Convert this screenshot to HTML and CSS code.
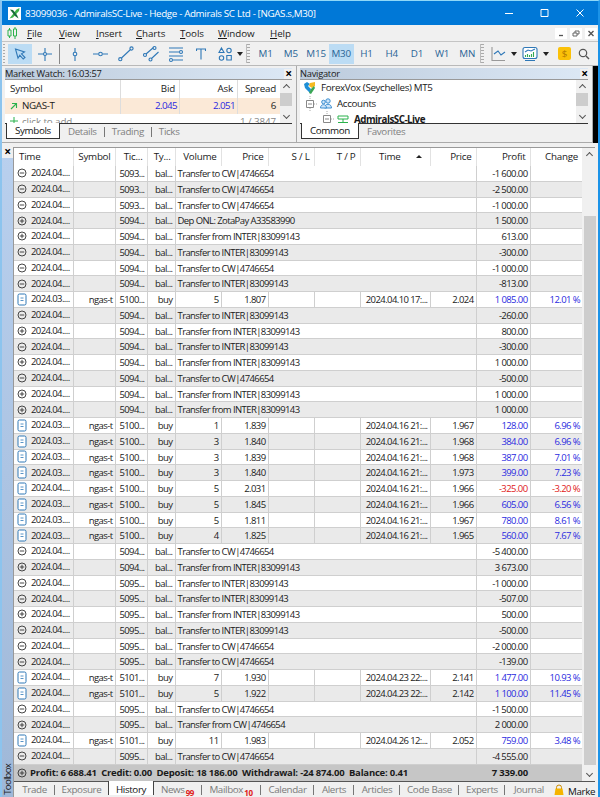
FILE: index.html
```html
<!DOCTYPE html>
<html lang="en">
<head>
    <meta charset="UTF-8">
    <meta name="viewport" content="width=device-width, initial-scale=1.0">
    <title>83099036 - AdmiralsSC-Live</title>
    <link rel="stylesheet" href="styles.css">
</head>
<body>
    <div class="window">
        <div class="titlebar">
            <svg class="logo" viewBox="0 0 13 13"><rect width="13" height="13" fill="#fff"/><path d="M11.500 1L8.500 2.500 1.500 11.500 5 10.500 11 4z" fill="#3fb54a"/><path d="M2 2.500L5 3l4 5 1.500 3.500L7 9z" fill="#176c3a"/></svg>
            <span class="title-text">83099036 - AdmiralsSC-Live - Hedge - Admirals SC Ltd - [NGAS.s,M30]</span>
            <svg class="win-buttons" viewBox="0 0 80 10" fill="none" stroke="#fff"><path d="M0 5.500h8M36 1.500h7v7h-7zM71.500 1.500l7 7M78.500 1.500l-7 7"/></svg>
        </div>

        <div class="menubar">
            <svg class="candles" viewBox="0 0 11 12" fill="none" stroke="#2bb24c"><path d="M2.500 1v2M2.500 9v2M1 3h3v6H1zM8 0v2M8 9v3M6.500 2h3v7h-3z"/></svg>
            <span class="menu m-file"><u>F</u>ile</span>
            <span class="menu m-view"><u>V</u>iew</span>
            <span class="menu m-insert"><u>I</u>nsert</span>
            <span class="menu m-charts"><u>C</u>harts</span>
            <span class="menu m-tools"><u>T</u>ools</span>
            <span class="menu m-window"><u>W</u>indow</span>
            <span class="menu"><u>H</u>elp</span>
            <div class="mdi">
                <svg viewBox="0 0 12 11" fill="none" stroke="#555"><path d="M4 7.500h4" stroke-width="1.300"/></svg>
                <svg viewBox="0 0 12 11" fill="none" stroke="#666"><path d="M3 5h4v3H3zM5 5V3h4v3H7"/></svg>
                <svg viewBox="0 0 12 11" fill="none" stroke="#555"><path d="M3.500 3l5 5M8.500 3l-5 5" stroke-width="1.400"/></svg>
            </div>
        </div>

        <div class="toolbar">
            <i class="grip"></i>
            <span class="tool active"><svg viewBox="0 0 24 20"><path d="M7.500 5l9 3-3 1.800 3.500 3.700-1.800 1.500-3.400-3.800-1.800 3z"/></svg></span>
            <span class="tool t-cross"><svg viewBox="0 0 14 20"><path d="M7 4v4.500M7 11.500V17M0 10h5.500M8.500 10H14"/><circle cx="7" cy="10" r="1.500"/></svg></span>
            <i class="divider"></i>
            <span class="tool t-vline"><svg viewBox="0 0 8 20"><path d="M4 4v4M4 12v5"/><circle cx="4" cy="10" r="1.800"/></svg></span>
            <span class="tool t-hline"><svg viewBox="0 0 15 20"><path d="M0 10h5.500M9.500 10H15"/><circle cx="7.500" cy="10" r="1.800"/></svg></span>
            <span class="tool t-trend"><svg viewBox="0 0 16 20"><path d="M3.500 14l9-8.500"/><circle cx="2.300" cy="15.200" r="1.600"/><circle cx="13.500" cy="4.500" r="1.600"/></svg></span>
            <span class="tool t-channel"><svg viewBox="0 0 16 20"><path d="M3 10l7.500-6.500M8.500 14.500l7-6.500"/><circle cx="2" cy="11" r="1.500"/><circle cx="11.500" cy="4" r="1.500"/><circle cx="7.500" cy="15.500" r="1.500"/></svg></span>
            <span class="tool t-fibo"><svg viewBox="0 0 16 20"><path d="M1 4h14M1 8h10M1 12h14M5 16h10"/><circle cx="13" cy="8" r="1.500"/><circle cx="3" cy="16" r="1.500"/></svg></span>
            <span class="tool t-text"><svg viewBox="0 0 10 20"><path d="M.5 7V5h9v2M5 5v10.500"/></svg></span>
            <span class="tool t-shapes"><svg viewBox="0 0 14 20"><path d="M3.500 4l2.500 4.500H1zM8.800 11.500h4.500V16H8.800z"/><circle cx="11" cy="6.500" r="2.200"/><circle cx="3.500" cy="14" r="2.200"/></svg></span>
            <i class="arrow"></i>
            <i class="grip g2"></i>
            <div class="periods">
                <span>M1</span><span>M5</span><span>M15</span><span class="on">M30</span><span>H1</span><span>H4</span><span>D1</span><span>W1</span><span>MN</span>
            </div>
            <i class="grip g3"></i>
            <span class="tool t-line"><svg viewBox="0 0 15 20"><path d="M1 3v13.500h13" stroke="#999"/><path d="M3 10l4-3 3 4 4-3"/></svg></span>
            <i class="arrow"></i>
            <span class="tool t-ind"><svg viewBox="0 0 16 20"><rect x="1" y="3.500" width="14" height="11" rx="2" fill="#fff"/><path d="M3 8l3-2 3 1 4-2M3 16.500h10"/><path d="M3.500 13v-2M5.500 13V10M7.500 13v-2M9.500 13v-3M11.500 13V8" stroke="#35a853"/></svg></span>
            <i class="arrow"></i>
            <span class="dollar">$</span>
            <span class="tool t-search"><svg viewBox="0 0 12 20"><circle cx="5" cy="9" r="3.700" stroke="#555" stroke-width="1.200"/><path d="M8 12l3 3" stroke="#555" stroke-width="1.400"/></svg></span>
        </div>

        <div class="docks">
            <div class="dock watch">
                <div class="dock-head"><span>Market Watch: 16:03:57</span><b class="close">×</b></div>
                <div class="dock-body">
                    <div class="quotes">
                        <div class="quote head"><span>Symbol</span><span>Bid</span><span>Ask</span><span>Spread</span></div>
                        <div class="quote hot"><span><svg class="up" viewBox="0 0 8 8"><path d="M1 7l5.500-5.500M2 1.500h4.500V6" fill="none" stroke="#2bb24c" stroke-width="1.100"/></svg>NGAS-T</span><span>2.045</span><span>2.051</span><span>6</span></div>
                        <div class="quote add"><span><svg class="up" viewBox="0 0 8 8"><path d="M4 0v8M0 4h8" fill="none" stroke="#2bb24c"/></svg>click to add</span><span></span><span></span><span>1 / 3847</span></div>
                    </div>
                    <div class="scroll"><i class="chev up-c"></i><i class="thumb"></i><i class="chev"></i></div>
                </div>
                <div class="dock-tabs"><span class="on">Symbols</span><span>Details</span><i></i><span>Trading</span><i></i><span>Ticks</span></div>
            </div>
            <div class="dock nav">
                <div class="dock-head"><span>Navigator</span><b class="close">×</b></div>
                <div class="dock-body">
                    <div class="tree">
                        <div class="node"><svg class="vox" viewBox="0 0 12 12"><path d="M0 2l3-2 3 2-2 2 3 3-1 4-5-5z" fill="#1f8fd6"/><path d="M6 1l5-1v4L8 6 5 4z" fill="#f5b921"/><path d="M10 4l1 2-4 6-2-1 2-4z" fill="#3aa655"/></svg><span>ForexVox (Seychelles) MT5</span></div>
                        <div class="node n1"><svg class="box" viewBox="0 0 12 16"><path d="M4 0v4M4 12v4M8 8h4" stroke="#aaa" stroke-dasharray="1 1" fill="none"/><path d="M.5 4.500h7v7h-7zM2 8h4" fill="none" stroke="#888"/></svg><svg class="people" viewBox="0 0 12 11" fill="#cfe6fa" stroke="#3d8fd1"><circle cx="8" cy="3" r="2.200"/><path d="M4.500 10c0-5 7-5 7 0z"/><circle cx="3.500" cy="4" r="1.800"/><path d="M.5 10c0-4.500 6-4.500 6 0z"/></svg><span>Accounts</span></div>
                        <div class="node n2"><svg class="box" viewBox="0 0 12 16"><path d="M4 0v4M4 12v4M8 8h4" stroke="#aaa" stroke-dasharray="1 1" fill="none"/><path d="M.5 4.500h7v7h-7zM2 8h4" fill="none" stroke="#888"/></svg><svg class="server" viewBox="0 0 12 11" fill="none" stroke="#2bb24c"><path d="M1 2h10v3H1zM6 5v4M1 8.500h10"/></svg><b>AdmiralsSC-Live</b></div>
                    </div>
                    <div class="scroll"><i class="chev up-c"></i><i class="thumb"></i><i class="chev"></i></div>
                </div>
                <div class="dock-tabs"><span class="on">Common</span><span>Favorites</span></div>
            </div>
            <div class="backdrop"></div>
        </div>

        <div class="toolbox">
            <div class="strip"><b class="close">×</b><span>Toolbox</span></div>
            <div class="history">
                <div class="grid-wrap">
                    <div class="grid">
                        <div class="row header">
                            <span class="left">Time</span><span>Symbol</span><span>Tic...</span><span>Ty...</span><span>Volume</span><span>Price</span><span>S / L</span><span>T / P</span><span class="sorted">Time<i></i></span><span>Price</span><span>Profit</span><span>Change</span>
                        </div>
                        <div id="rows"></div>
                        <div class="total">
                            <svg class="op" viewBox="0 0 10 10"><circle cx="5" cy="5" r="4"/><path d="M2.800 5h4.400M5 2.800v4.400"/></svg>
                            <span class="sum">Profit: 6 688.41&nbsp; Credit: 0.00&nbsp; Deposit: 18 186.00&nbsp; Withdrawal: -24 874.00&nbsp; Balance: 0.41</span>
                            <span class="result">7 339.00</span>
                        </div>
                    </div>
                    <div class="scroll big"><i class="chev up-c"></i><i class="thumb"></i><i class="chev"></i></div>
                </div>
                <div class="tabs">
                    <span class="w1">Trade</span><span class="w2">Exposure</span><span class="w3 on">History</span><span class="w4">News<sub>99</sub></span><span class="w5">Mailbox<sub>10</sub></span><span class="w6">Calendar</span><span class="w7">Alerts</span><span class="w8">Articles</span><span class="w9">Code Base</span><span class="w10">Experts</span><span class="w11">Journal</span>
                    <span class="market"><svg viewBox="0 0 10 12"><path d="M2.500 5V3.500a2.500 2.500 0 015 0V5" fill="none" stroke="#c98a00"/><path d="M1.500 4.500h7l1 6.500h-9z" fill="#f5b400"/></svg>Marke</span>
                </div>
            </div>
        </div>
    </div>
    <script src="script.js"></script>
</body>
</html>
```
FILE: styles.css
```css
body {
    margin: 0;
    font-family: "Open Sans", "Noto Sans", sans-serif;
    font-size: 9.8px;
    letter-spacing: -0.35px;
    color: #1a1a1a;
    background: #f0f0f0;
}

.window {
    box-sizing: border-box;
    width: 600px;
    height: 797px;
    overflow: hidden;
    display: flex;
    flex-direction: column;
    border-top: 1px solid #8fd8f8;
    border-left: 2px solid #8cc4ee;
    border-right: 2px solid #1b93e8;
    white-space: nowrap;
}

svg {
    display: block;
    flex: none;
}

/* title bar */
.titlebar {
    height: 24px;
    flex: none;
    display: flex;
    align-items: center;
    background: #0078d7;
    color: #fff;
}

.logo {
    width: 13px;
    height: 13px;
    margin-left: 6px;
}

.title-text {
    margin-left: 4px;
}

.win-buttons {
    width: 80px;
    height: 10px;
    margin-left: auto;
    margin-right: 13px;
}

/* menu */
.menubar {
    height: 16px;
    flex: none;
    display: flex;
    align-items: center;
    border-bottom: 1px solid #c4c4c4;
}

.candles {
    width: 11px;
    height: 12px;
    margin: 0 9px 0 5px;
}

.menu { letter-spacing: -0.1px; }
.m-file { width: 32px; }
.m-view { width: 37px; }
.m-insert { width: 40px; }
.m-charts { width: 44px; }
.m-tools { width: 38px; }
.m-window { width: 52px; }

.mdi {
    display: flex;
    gap: 3px;
    margin-left: auto;
    margin-right: 1px;
}

.mdi svg {
    width: 12px;
    height: 11px;
    background: #fff;
}

/* toolbar */
.toolbar {
    height: 23px;
    flex: none;
    display: flex;
    align-items: center;
    border-bottom: 1px solid #b9b9b9;
}

.grip {
    width: 2px;
    height: 19px;
    margin: 0 3px 0 1px;
    background: repeating-linear-gradient(#aaa 0 1px, #f0f0f0 1px 3px);
}

.tool svg {
    height: 20px;
    fill: none;
    stroke: #2f78b7;
    stroke-width: 1.1;
}

.tool.active {
    background: #bcdcf4;
}

.tool.active svg { width: 24px; }
.t-cross { margin-left: 6px; }
.t-cross svg { width: 14px; }
.divider { width: 1px; height: 20px; margin: 0 10px 0 7px; background: #888; }
.t-vline { margin-left: 1px; }
.t-vline svg { width: 8px; }
.t-hline { margin-left: 14px; }
.t-hline svg { width: 15px; }
.t-trend { margin-left: 10px; }
.t-trend svg { width: 16px; }
.t-channel { margin-left: 9px; }
.t-channel svg { width: 16px; }
.t-fibo { margin-left: 9px; }
.t-fibo svg { width: 16px; }
.t-text { margin-left: 12px; }
.t-text svg { width: 10px; }
.t-shapes { margin-left: 12px; }
.t-shapes svg { width: 14px; }

.arrow {
    margin-left: 5px;
    border: 3px solid transparent;
    border-top: 4px solid #222;
    border-bottom: 0;
}

.g2 {
    margin: 0 0 0 3px;
    padding-left: 1px;
    border-left: 1px solid #bbb;
}

.periods {
    display: flex;
    width: 227px;
    margin-left: 3px;
    color: #2a6496;
    line-height: 20px;
    letter-spacing: -0.1px;
}

.periods span {
    width: 25.3px;
    text-align: center;
}

.periods .on {
    background: #bcdcf4;
}

.g3 {
    margin: 0;
    padding-left: 1px;
    border-left: 1px solid #bbb;
}

.t-line { margin-left: 7px; }
.t-line svg { width: 15px; }
.t-ind { margin-left: 5px; }
.t-ind svg { width: 16px; }

.dollar {
    width: 13px;
    height: 13px;
    margin-left: 9px;
    border-radius: 2px;
    background: #fbc108;
    color: #b37a00;
    line-height: 13px;
    text-align: center;
}

.t-search { margin-left: 7px; }
.t-search svg { width: 12px; }

/* docked panels */
.docks {
    height: 77px;
    flex: none;
    display: flex;
}

.dock {
    display: flex;
    flex-direction: column;
    box-sizing: border-box;
    padding: 2px 4px 2px 3px;
    border-bottom: 1px solid #aaa;
    border-right: 1px solid #aaa;
}

.watch { width: 295px; }
.nav { width: 296px; }

.backdrop {
    flex: 1;
    background: #000;
}

.dock-head {
    display: flex;
    align-items: center;
    height: 12px;
    flex: none;
    box-sizing: border-box;
    background: linear-gradient(90deg, #bccbdc, #dce8f5);
    font-size: 9.3px;
    line-height: 10px;
    letter-spacing: -0.25px;
    border-bottom: 1px solid #999;
}

.close {
    margin-left: auto;
    width: 9px;
    text-align: center;
    font-size: 12px;
    line-height: 10px;
    color: #000;
    background: #f0f0f0;
}

.dock-head .close {
    margin-right: -1px;
}

.dock-body {
    display: flex;
    height: 43px;
    flex: none;
    overflow: hidden;
    background: #fff;
}

.quotes, .tree {
    flex: 1;
}

.quote {
    display: grid;
    grid-template-columns: 116px 59px 58px 42px;
    height: 15.5px;
    line-height: 15px;
    text-align: right;
}

.quote.head { height: 18px; line-height: 18px; letter-spacing: -0.2px; }
.quote.head span, .quote.hot span { border-right: 1px solid #ddd; }
.quote span { padding-right: 4px; }
.quote span:first-child { display: flex; align-items: center; padding-left: 5px; }
.quote.hot span:last-child, .quote.head span:last-child { border: 0; }
.quote.hot { background: #fbe9d7; }
.quote.hot span:nth-child(2), .quote.hot span:nth-child(3) { color: #2a2ae0; padding-right: 2px; letter-spacing: -0.6px; }
.quote.add { color: #888; letter-spacing: -0.1px; }
.quote .up { width: 8px; height: 8px; margin-right: 4px; }

.scroll {
    width: 12px;
    flex: none;
    display: flex;
    flex-direction: column;
    align-items: center;
    background: #f0f0f0;
}

.chev {
    width: 4px;
    height: 4px;
    margin: 1px 0 5px;
    border: solid #555;
    border-width: 0 1.3px 1.3px 0;
    transform: rotate(45deg);
}

.chev.up-c {
    margin: 5px 0 3px;
    transform: rotate(225deg);
}

.thumb {
    width: 12px;
    height: 13px;
    margin-bottom: auto;
    background: #cdcdcd;
}

.dock-tabs {
    display: flex;
    align-items: flex-start;
    height: 16px;
    border-top: 1px solid #333;
    color: #808080;
    line-height: 15px;
}

.dock-tabs .on {
    box-sizing: border-box;
    height: 16px;
    margin: -1px 8px 0 1px;
    padding: 0 8px;
    background: #fff;
    border: solid #333;
    border-width: 0 1px 1px 1px;
    color: #111;
    line-height: 16px;
}

.dock-tabs i {
    width: 1px;
    height: 10px;
    margin: 3px 7px 0 7px;
    background: #777;
}

.node {
    display: flex;
    align-items: center;
    height: 15.7px;
    padding-left: 4px;
}

.vox { width: 12px; height: 12px; margin-right: 5px; }
.box { width: 12px; height: 16px; }
.n1 { padding-left: 6px; }
.n2 { padding-left: 23px; }
.people, .server { width: 12px; height: 11px; margin: 0 5px 0 2px; }
.node b { letter-spacing: -0.5px; }

/* toolbox */
.toolbox {
    flex: 1;
    min-height: 0;
    display: flex;
    padding: 4px 3px 0 0;
}

.strip {
    width: 11px;
    flex: none;
    display: flex;
    flex-direction: column;
    justify-content: space-between;
    align-items: center;
    background: linear-gradient(#b9d0ee, #9fb8d8);
}

.strip .close {
    width: 11px;
    height: 11px;
    margin: 0;
}

.strip span {
    writing-mode: vertical-rl;
    transform: rotate(180deg);
    font-size: 9.5px;
    line-height: 11px;
    letter-spacing: -0.7px;
    padding-top: 2px;
}

.history {
    flex: 1;
    min-width: 0;
    border-left: 1px solid #999;
    border-top: 1px solid #999;
}

.grid-wrap {
    display: flex;
    height: 633px;
}

.grid {
    width: 568px;
    flex: none;
    background: #fff;
}

.row {
    display: grid;
    grid-template-columns: 59.5px 42px 32px 28px 46px 47px 46px 46px 70px 46px 54px 51.5px;
    height: 15.757px;
    line-height: 16px;
    font-size: 9.5px;
    letter-spacing: -0.59px;
}

.row span {
    box-sizing: border-box;
    overflow: hidden;
    padding-right: 2px;
    text-align: right;
    border-right: 1px solid #cfcfcf;
    border-bottom: 1px solid #cfcfcf;
}

.row span:last-child {
    border-right: 0;
}

.row.header {
    height: 18px;
    line-height: 17px;
    font-size: 9.8px;
    letter-spacing: -0.25px;
}

.row.header span {
    padding-right: 4px;
    border-bottom: 0;
    border-color: #e2e2e2;
}

.row.header .left {
    padding-left: 5px;
    text-align: left;
}

.row .sorted {
    display: flex;
    justify-content: flex-end;
    gap: 15px;
}

.sorted i {
    margin: 7px 4px 0 0;
    height: 0;
    border: 3px solid transparent;
    border-top: 0;
    border-bottom: 3px solid #222;
}

.row.alt {
    background: #eaeaea;
}

.row .time {
    display: flex;
    align-items: center;
    padding-left: 3px;
}

.row .comment {
    grid-column: span 6;
    padding-left: 2px;
    text-align: left;
}

.op {
    width: 10px;
    height: 10px;
    fill: none;
    stroke: #333;
    stroke-width: 0.9;
}

.deal {
    width: 10px;
    height: 13px;
    fill: #fff;
    stroke: #2f78b7;
}

.time svg {
    margin-right: 4px;
}

.row .profit { color: #2a2ae0; }
.row .loss { color: #e02020; }

.total {
    display: flex;
    align-items: center;
    height: 16px;
    padding: 0 54px 0 3px;
    background: #c6c6c6;
    font-weight: bold;
    font-size: 9.5px;
    letter-spacing: -0.2px;
}

.sum { margin-left: 3px; }
.result { margin-left: auto; }

.scroll.big {
    flex: none;
    width: 13px;
    margin-left: 1px;
}

.big .thumb {
    height: 549px;
    margin-top: 55px;
}

.tabs {
    display: flex;
    height: 17px;
    border-top: 1px solid #555;
    line-height: 15px;
    color: #7a7a7a;
}

.tabs span {
    box-sizing: border-box;
    text-align: center;
    position: relative;
    flex: none;
}

.tabs span:not(.on):not(.w2):not(.market)::after {
    content: "";
    position: absolute;
    right: 0;
    top: 3px;
    width: 1px;
    height: 10px;
    background: #777;
}

.tabs .on {
    height: 14px;
    margin-top: -1px;
    background: #fff;
    border: solid #444;
    border-width: 0 1px 0 1px;
    color: #111;
    line-height: 17px;
}

.tabs sub {
    margin-left: 1px;
    color: #e02020;
    font-size: 8px;
    font-weight: bold;
    line-height: 0;
    vertical-align: -3px;
}

.w1 { width: 41px; }
.w2 { width: 53px; }
.w3 { width: 46px; }
.w4 { width: 48px; }
.w5 { width: 59px; }
.w6 { width: 53px; }
.w7 { width: 40px; }
.w8 { width: 46px; }
.w9 { width: 59px; }
.w10 { width: 46px; }
.w11 { width: 48px; }
.w4, .w5 { padding-right: 1px; }
.tabs .w11::after { display: none; }

.market {
    display: flex;
    margin: 2px 0 0 1px;
    color: #111;
}

.market svg {
    width: 10px;
    height: 12px;
    margin-right: 4px;
}
```
FILE: script.js
```js
// balance: [sign, ticket, comment, amount]
// deal: [day prefix, ticket, volume, price, close time, close price, profit, change]
const rows = [
    ['-', '5093', 'Transfer to CW|4746654', '-1 600.00'],
    ['-', '5093', 'Transfer to CW|4746654', '-2 500.00'],
    ['-', '5093', 'Transfer to CW|4746654', '-1 000.00'],
    ['+', '5094', 'Dep ONL: ZotaPay A33583990', '1 500.00'],
    ['+', '5094', 'Transfer from INTER|83099143', '613.00'],
    ['-', '5094', 'Transfer to INTER|83099143', '-300.00'],
    ['-', '5094', 'Transfer to CW|4746654', '-1 000.00'],
    ['-', '5094', 'Transfer to INTER|83099143', '-813.00'],
    ['2024.03', '5100', '5', '1.807', '2024.04.10 17:...', '2.024', '1 085.00', '12.01 %'],
    ['-', '5094', 'Transfer to INTER|83099143', '-260.00'],
    ['+', '5094', 'Transfer from INTER|83099143', '800.00'],
    ['-', '5094', 'Transfer to INTER|83099143', '-300.00'],
    ['+', '5094', 'Transfer from INTER|83099143', '1 000.00'],
    ['-', '5094', 'Transfer to CW|4746654', '-500.00'],
    ['+', '5094', 'Transfer from INTER|83099143', '1 000.00'],
    ['+', '5094', 'Transfer from INTER|83099143', '1 000.00'],
    ['2024.03', '5100', '1', '1.839', '2024.04.16 21:...', '1.967', '128.00', '6.96 %'],
    ['2024.03', '5100', '3', '1.840', '2024.04.16 21:...', '1.968', '384.00', '6.96 %'],
    ['2024.03', '5100', '3', '1.839', '2024.04.16 21:...', '1.968', '387.00', '7.01 %'],
    ['2024.03', '5100', '3', '1.840', '2024.04.16 21:...', '1.973', '399.00', '7.23 %'],
    ['2024.04', '5100', '5', '2.031', '2024.04.16 21:...', '1.966', '-325.00', '-3.20 %'],
    ['2024.03', '5100', '5', '1.845', '2024.04.16 21:...', '1.966', '605.00', '6.56 %'],
    ['2024.03', '5100', '5', '1.811', '2024.04.16 21:...', '1.967', '780.00', '8.61 %'],
    ['2024.03', '5100', '4', '1.825', '2024.04.16 21:...', '1.965', '560.00', '7.67 %'],
    ['-', '5094', 'Transfer to CW|4746654', '-5 400.00'],
    ['+', '5094', 'Transfer from INTER|83099143', '3 673.00'],
    ['-', '5095', 'Transfer to INTER|83099143', '-1 000.00'],
    ['-', '5095', 'Transfer to INTER|83099143', '-507.00'],
    ['+', '5095', 'Transfer from INTER|83099143', '500.00'],
    ['-', '5095', 'Transfer to INTER|83099143', '-500.00'],
    ['-', '5095', 'Transfer to CW|4746654', '-2 000.00'],
    ['-', '5095', 'Transfer to CW|4746654', '-139.00'],
    ['2024.04', '5101', '7', '1.930', '2024.04.23 22:...', '2.141', '1 477.00', '10.93 %'],
    ['2024.04', '5101', '5', '1.922', '2024.04.23 22:...', '2.142', '1 100.00', '11.45 %'],
    ['-', '5095', 'Transfer to CW|4746654', '-1 500.00'],
    ['+', '5095', 'Transfer from CW|4746654', '2 000.00'],
    ['2024.04', '5101', '11', '1.983', '2024.04.26 12:...', '2.052', '759.00', '3.48 %'],
    ['-', '5095', 'Transfer to CW|4746654', '-4 555.00']
];

function opIcon(sign) {
    const bar = sign === '+' ? 'M2.8 5h4.4M5 2.8v4.4' : 'M2.8 5h4.4';
    return '<svg class="op" viewBox="0 0 10 10"><circle cx="5" cy="5" r="4"/><path d="' + bar + '"/></svg>';
}

const dealIcon = '<svg class="deal" viewBox="0 0 10 13"><rect x="1" y="1" width="8" height="11" rx="1.5"/><path d="M3.5 5h3M3.5 7.500h3" stroke-width=".8"/></svg>';

document.getElementById('rows').innerHTML = rows.map((r, i) => {
    const cls = i % 2 ? 'row alt' : 'row';
    let cells;
    if (r.length === 4) {
        cells = `<span class="time">${opIcon(r[0])}2024.04....</span><span></span><span>${r[1]}...</span><span>bal...</span>` +
            `<span class="comment">${r[2]}</span><span>${r[3]}</span><span></span>`;
    } else {
        const tone = r[6].startsWith('-') ? 'loss' : 'profit';
        cells = `<span class="time">${dealIcon}${r[0]}....</span><span>ngas-t</span><span>${r[1]}...</span><span>buy</span>` +
            `<span>${r[2]}</span><span>${r[3]}</span><span></span><span></span><span>${r[4]}</span><span>${r[5]}</span>` +
            `<span class="${tone}">${r[6]}</span><span class="${tone}">${r[7]}</span>`;
    }
    return `<div class="${cls}">${cells}</div>`;
}).join('');
```
